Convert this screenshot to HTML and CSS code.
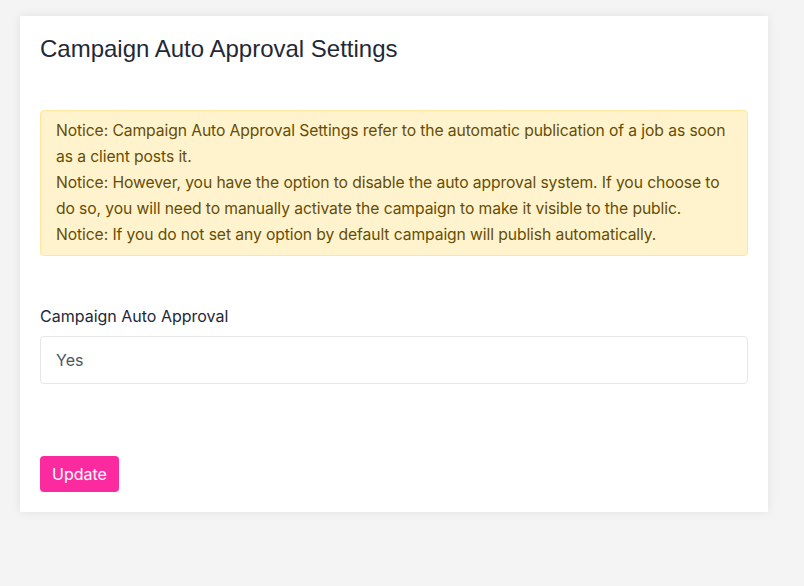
FILE: index.html
```html
<!DOCTYPE html>
<html lang="en">
<head>
    <meta charset="UTF-8">
    <meta name="viewport" content="width=device-width, initial-scale=1.0">
    <title>Campaign Auto Approval Settings</title>
    <link rel="stylesheet" href="styles.css">
</head>
<body>

    <div class="card">
        <h4 class="card-title">Campaign Auto Approval Settings</h4>

        <div class="alert-warning">
            Notice: Campaign Auto Approval Settings refer to the automatic publication of a job as soon as a client posts it.<br>
            Notice: However, you have the option to disable the auto approval system. If you choose to do so, you will need to manually activate the campaign to make it visible to the public.<br>
            Notice: If you do not set any option by default campaign will publish automatically.
        </div>

        <form class="settings-form">
            <label class="form-label" for="autoApproval">Campaign Auto Approval</label>
            <div class="form-select" id="autoApproval">Yes</div>

            <button type="button" class="btn-update">Update</button>
        </form>
    </div>

</body>
</html>
```

FILE: styles.css
```css
body {
    font-family: 'Inter', 'Liberation Sans', sans-serif;
    margin: 0;
    padding: 16px 36px 74px 20px;
    background-color: #f4f4f4;
    color: #1f2937;
}

.card {
    background-color: #fff;
    box-shadow: 0 0 10px rgba(0, 0, 0, 0.08);
    padding: 20px;
}

.card-title {
    font-family: 'Liberation Sans', Arial, sans-serif;
    font-weight: normal;
    font-size: 24px;
    line-height: 26px;
    margin: 0 0 48px 0;
    color: #1f2937;
}

.alert-warning {
    background-color: #fff3cd;
    border: 1px solid #ffe69c;
    border-radius: 4px;
    color: #664d03;
    font-size: 15.7px;
    line-height: 26px;
    padding: 7px 15px;
    letter-spacing: -0.1px;
}

.settings-form {
    display: flex;
    flex-direction: column;
    align-items: flex-start;
    margin-top: 48px;
}

.form-label {
    font-size: 16px;
    line-height: 24px;
    margin-bottom: 8px;
    color: #1f2937;
}

.form-select {
    align-self: stretch;
    border: 1px solid #e5e7eb;
    border-radius: 4px;
    padding: 11px 15px;
    font-size: 16px;
    line-height: 24px;
    color: #4b5563;
}

.btn-update {
    margin-top: 72px;
    background-color: #fb2a9f;
    color: #fff;
    border: none;
    border-radius: 4px;
    padding: 6px 12px;
    font-family: 'Inter', 'Liberation Sans', sans-serif;
    font-size: 16px;
    line-height: 24px;
    cursor: pointer;
}
```
